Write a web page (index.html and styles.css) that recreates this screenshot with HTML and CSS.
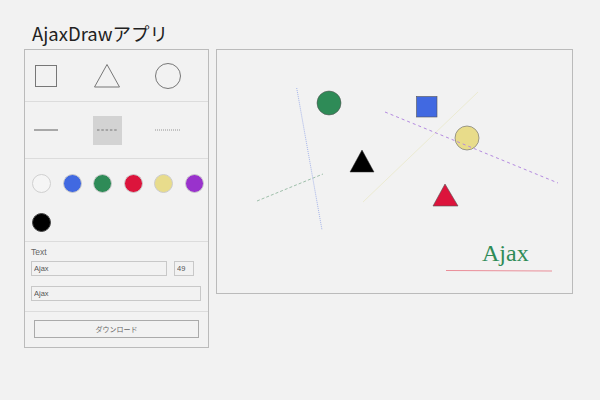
FILE: index.html
```html
<!DOCTYPE html>
<html lang="ja">
<head>
<meta charset="utf-8">
<title>AjaxDraw</title>
<link rel="stylesheet" href="styles.css">
</head>
<body>
<div class="app">
  <h1 class="title">AjaxDrawアプリ</h1>
  <div class="main">
    <aside class="panel">
      <section class="sec shapes">
        <div class="cell"><svg width="24" height="24" viewBox="0 0 24 24"><rect x="1.5" y="1.5" width="21" height="21" fill="none" stroke="#777" stroke-width="1"/></svg></div>
        <div class="cell"><svg width="28" height="26" viewBox="0 0 28 26"><polygon points="14,1.5 26.5,24 1.5,24" fill="none" stroke="#777" stroke-width="1"/></svg></div>
        <div class="cell"><svg width="28" height="28" viewBox="0 0 28 28"><circle cx="14" cy="14" r="12.5" fill="none" stroke="#777" stroke-width="1"/></svg></div>
      </section>
      <section class="sec lines">
        <div class="cell"><div class="lbox"><svg width="24" height="4" viewBox="0 0 24 4"><line x1="0" y1="2" x2="24" y2="2" stroke="#777" stroke-width="1.2"/></svg></div></div>
        <div class="cell"><div class="lbox selected"><svg width="20" height="4" viewBox="0 0 20 4"><line x1="0" y1="2" x2="20" y2="2" stroke="#777" stroke-width="1" stroke-dasharray="2.5 1.8"/></svg></div></div>
        <div class="cell"><div class="lbox"><svg width="26" height="4" viewBox="0 0 26 4"><line x1="0" y1="2" x2="26" y2="2" stroke="#888" stroke-width="0.9" stroke-dasharray="1 1"/></svg></div></div>
      </section>
      <section class="sec colors">
        <span class="dot c-white"></span>
        <span class="dot c-blue"></span>
        <span class="dot c-green"></span>
        <span class="dot c-red"></span>
        <span class="dot c-yellow"></span>
        <span class="dot c-purple"></span>
        <span class="dot c-black"></span>
      </section>
      <section class="sec text">
        <label class="lbl">Text</label>
        <div class="row">
          <input class="inp wide" type="text" value="Ajax">
          <input class="inp num" type="text" value="49">
        </div>
        <div class="row">
          <input class="inp full" type="text" value="Ajax">
        </div>
      </section>
      <section class="sec dl">
        <button class="btn">ダウンロード</button>
      </section>
    </aside>
    <div class="canvas">
      <svg width="355" height="243" viewBox="0 0 355 243">
        <line x1="146" y1="152" x2="261" y2="42" stroke="#ecebd2" stroke-width="1"/>
        <line x1="40" y1="151" x2="106" y2="124" stroke="#9ebfaa" stroke-width="1" stroke-dasharray="3 2"/>
        <line x1="79.7" y1="38" x2="105" y2="180" stroke="#a5b4ea" stroke-width="1" stroke-dasharray="1 1"/>
        <circle cx="112" cy="53" r="12" fill="#2e8b57" stroke="#555" stroke-width="0.6"/>
        <rect x="199.5" y="46.5" width="20.5" height="20.5" fill="#4169e1" stroke="#555" stroke-width="0.6"/>
        <circle cx="250" cy="88" r="12" fill="#e8dc8a" stroke="#777" stroke-width="0.7"/>
        <line x1="168" y1="62" x2="341" y2="133" stroke="#b48ae0" stroke-width="1" stroke-dasharray="3 3"/>
        <polygon points="145,100 157,122 133,122" fill="#000" stroke="#333" stroke-width="0.5"/>
        <polygon points="228,134 241,156 216,156" fill="#dc143c" stroke="#555" stroke-width="0.6"/>
        <text x="265" y="211" class="ajax">Ajax</text>
        <line x1="229" y1="220.5" x2="335" y2="221" stroke="#ea8e99" stroke-width="1"/>
      </svg>
    </div>
  </div>
</div>
</body>
</html>
```
FILE: styles.css
```css
* { box-sizing: border-box; }
html, body { margin: 0; padding: 0; }
body {
  background: #f2f2f2;
  font-family: "Noto Sans CJK JP", "Noto Sans", sans-serif;
  color: #222;
  width: 600px;
  height: 400px;
  overflow: hidden;
}
.app { padding: 20px 0 0 24px; }
.title {
  margin: 0 0 3px 0;
  padding-left: 8px;
  font-size: 18.5px;
  font-weight: 400;
  line-height: 26px;
  color: #222;
}
.main { display: flex; gap: 7px; align-items: flex-start; }
.panel {
  width: 185px;
  border: 1px solid #bbb;
  display: flex;
  flex-direction: column;
}
.sec { border-bottom: 1px solid #dcdcdc; }
.sec:last-child { border-bottom: none; }
.shapes, .lines {
  display: grid;
  grid-template-columns: repeat(3, 40px);
  column-gap: 21px;
  padding-left: 1px;
  align-items: center;
}
.shapes { height: 52px; }
.lines { height: 57px; }
.cell { display: flex; align-items: center; justify-content: center; height: 40px; }
.shapes svg { display: block; }
.lbox { width: 29px; height: 29px; display: flex; align-items: center; justify-content: center; }
.lbox svg { display: block; }
.selected { background: #d3d3d3; }
.colors {
  display: flex;
  flex-wrap: wrap;
  gap: 20px 11.6px;
  padding: 15px 0 9px 7px;
}
.dot { width: 19px; height: 19px; border-radius: 50%; display: block; border: 1px solid #ccc; }
.c-white { background: #f5f5f5; border-color: #d0d0d0; }
.c-blue { background: #4169e1; }
.c-green { background: #2e8b57; }
.c-red { background: #dc143c; }
.c-yellow { background: #e8dc8c; }
.c-purple { background: #9932cc; }
.c-black { background: #000; border-color: #444; }
.text { padding: 4px 6px 10px 6px; display: flex; flex-direction: column; gap: 0; }
.lbl { font-family: "Liberation Sans", Arial, sans-serif; font-size: 8.5px; color: #666; line-height: 12px; margin-bottom: 3px; }
.row { display: flex; gap: 7px; }
.row + .row { margin-top: 10px; }
.inp {
  height: 15px;
  border: 1px solid #c8c8c8;
  background: #f2f2f2;
  font-family: "Liberation Sans", Arial, sans-serif;
  font-size: 7.5px;
  color: #555;
  padding: 0 2px;
  margin: 0;
  outline: none;
}
.wide { width: 136px; }
.num { width: 20px; }
.full { width: 170px; }
.dl { padding: 8px 9px 9px 9px; }
.btn {
  display: block;
  width: 165px;
  height: 18px;
  border: 1px solid #aaa;
  background: #f2f2f2;
  font-family: "Noto Sans CJK JP", sans-serif;
  font-size: 7px;
  color: #666;
  padding: 0;
  margin: 0;
}
.canvas {
  width: 357px;
  height: 245px;
  border: 1px solid #bbb;
}
.canvas svg { display: block; }
.ajax {
  font-family: "Liberation Serif", "Times New Roman", serif;
  font-size: 24px;
  fill: #2e8b57;
}
```
